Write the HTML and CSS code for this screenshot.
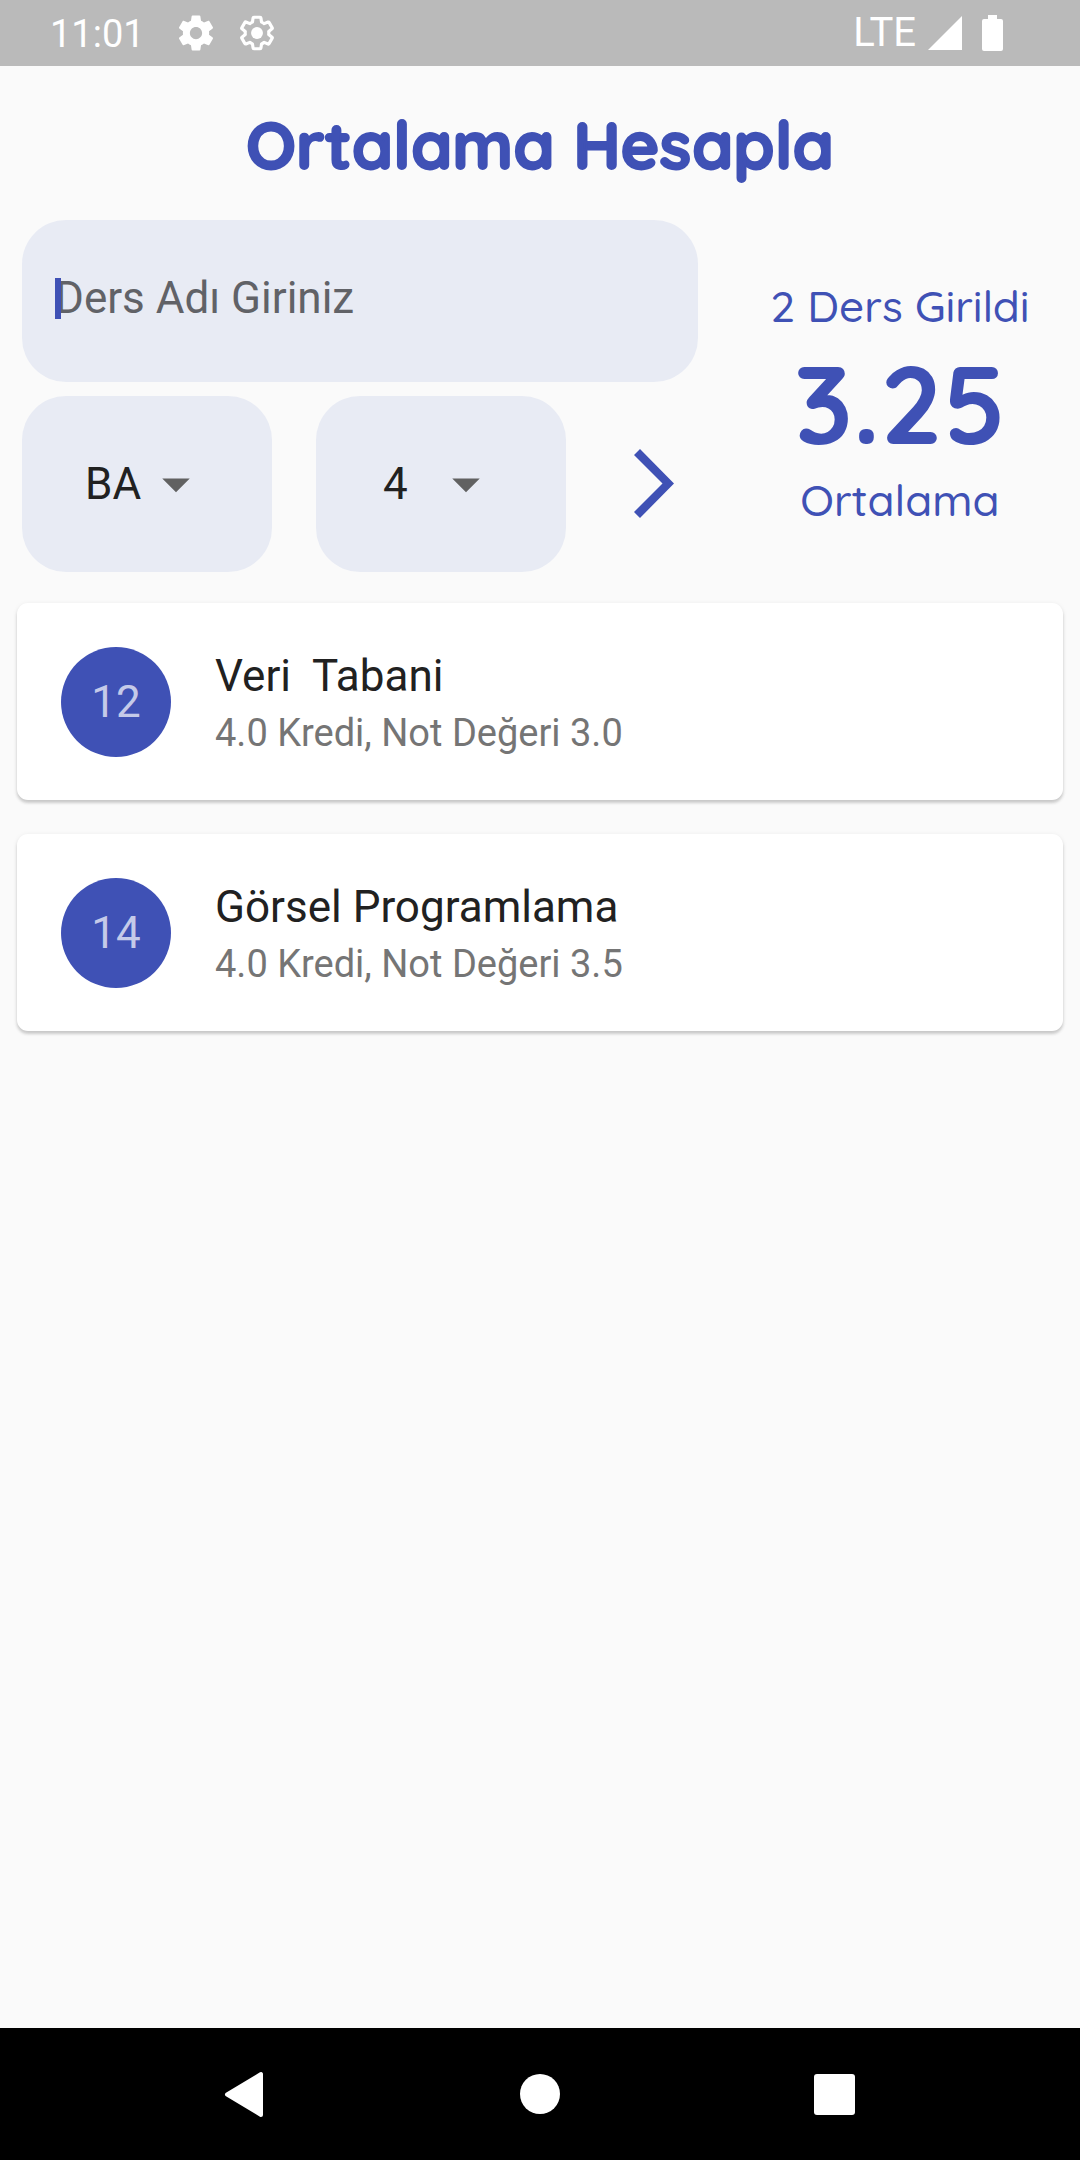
FILE: index.html
```
<!DOCTYPE html>
<html lang="tr">
<head>
<meta charset="utf-8">
<meta name="viewport" content="width=device-width, initial-scale=1">
<title>Ortalama Hesapla</title>
<link rel="stylesheet" href="styles.css">
</head>
<body>
<div class="status-bar">
  <span class="clock">11:01</span>
  <svg class="status-gear" viewBox="0 0 24 24" aria-hidden="true"><path fill="currentColor" d="M19.43 12.98c.04-.32.07-.64.07-.98s-.03-.66-.07-.98l2.11-1.65c.19-.15.24-.42.12-.64l-2-3.46c-.12-.22-.39-.3-.61-.22l-2.49 1c-.52-.4-1.08-.73-1.69-.98l-.38-2.65C14.46 2.18 14.25 2 14 2h-4c-.25 0-.46.18-.49.42l-.38 2.65c-.61.25-1.17.59-1.69.98l-2.49-1c-.23-.09-.49 0-.61.22l-2 3.46c-.13.22-.07.49.12.64l2.11 1.65c-.04.32-.07.65-.07.98s.03.66.07.98l-2.11 1.65c-.19.15-.24.42-.12.64l2 3.46c.12.22.39.3.61.22l2.49-1c.52.4 1.08.73 1.69.98l.38 2.65c.03.24.24.42.49.42h4c.25 0 .46-.18.49-.42l.38-2.65c.61-.25 1.17-.59 1.69-.98l2.49 1c.23.09.49 0 .61-.22l2-3.46c.12-.22.07-.49-.12-.64l-2.11-1.65zM12 15.5c-1.93 0-3.5-1.57-3.5-3.5s1.57-3.5 3.5-3.5 3.5 1.57 3.5 3.5-1.57 3.5-3.5 3.5z"/></svg>
  <svg class="status-gear" viewBox="0 0 24 24" aria-hidden="true"><path fill="none" stroke="currentColor" stroke-width="2" stroke-linejoin="round" transform="translate(1.2 1.2) scale(.9)" d="M19.43 12.98c.04-.32.07-.64.07-.98s-.03-.66-.07-.98l2.11-1.65c.19-.15.24-.42.12-.64l-2-3.46c-.12-.22-.39-.3-.61-.22l-2.49 1c-.52-.4-1.08-.73-1.69-.98l-.38-2.65C14.46 2.18 14.25 2 14 2h-4c-.25 0-.46.18-.49.42l-.38 2.65c-.61.25-1.17.59-1.69.98l-2.49-1c-.23-.09-.49 0-.61.22l-2 3.46c-.13.22-.07.49.12.64l2.11 1.65c-.04.32-.07.65-.07.98s.03.66.07.98l-2.11 1.65c-.19.15-.24.42-.12.64l2 3.46c.12.22.39.3.61.22l2.49-1c.52.4 1.08.73 1.69.98l.38 2.65c.03.24.24.42.49.42h4c.25 0 .46-.18.49-.42l.38-2.65c.61-.25 1.17-.59 1.69-.98l2.49 1c.23.09.49 0 .61-.22l2-3.46c.12-.22.07-.49-.12-.64l-2.11-1.65z"/><circle cx="12" cy="12" r="3.4" fill="currentColor"/></svg>
  <span class="network">LTE</span>
  <svg class="signal" viewBox="0 0 34 34" aria-hidden="true"><path fill="currentColor" d="M34 0v34H0z"/></svg>
  <svg class="battery" viewBox="0 0 21 36" aria-hidden="true"><path fill="currentColor" d="M6 0h9v4h4a2 2 0 0 1 2 2v28a2 2 0 0 1-2 2H2a2 2 0 0 1-2-2V6a2 2 0 0 1 2-2h4z"/></svg>
</div>

<main class="content">
  <h1 class="title">Ortalama Hesapla</h1>

  <div class="top">
    <form class="lesson-form">
      <div class="name-field">
        <input class="name-input" type="text" placeholder="Ders Adı Giriniz" aria-label="Ders Adı">
        <span class="cursor"></span>
      </div>
      <div class="form-row">
        <div class="picker">
          <select class="picker-select picker-grade" aria-label="Harf Notu">
            <option>AA</option>
            <option selected>BA</option>
            <option>BB</option>
          </select>
          <svg class="picker-arrow" viewBox="0 0 24 24" aria-hidden="true"><path fill="currentColor" d="M7 10l5 5 5-5z"/></svg>
        </div>
        <div class="picker">
          <select class="picker-select picker-credit" aria-label="Kredi">
            <option>3</option>
            <option selected>4</option>
            <option>5</option>
          </select>
          <svg class="picker-arrow" viewBox="0 0 24 24" aria-hidden="true"><path fill="currentColor" d="M7 10l5 5 5-5z"/></svg>
        </div>
        <button class="add" type="button" aria-label="Ders Ekle">
          <svg class="add-icon" viewBox="0 0 40 70" aria-hidden="true"><path fill="currentColor" d="M6 0l34 34.500L6 69l-6-6 28.500-28.500L0 6z"/></svg>
        </button>
      </div>
    </form>
    <section class="average">
      <p class="average-label">2 Ders Girildi</p>
      <p class="average-value">3.25</p>
      <p class="average-label">Ortalama</p>
    </section>
  </div>

  <ul class="lessons">
    <li class="lesson">
      <span class="avatar">12</span>
      <div class="lesson-text">
        <h2 class="lesson-name">Veri  Tabani</h2>
        <p class="lesson-info">4.0 Kredi, Not Değeri 3.0</p>
      </div>
    </li>
    <li class="lesson">
      <span class="avatar">14</span>
      <div class="lesson-text">
        <h2 class="lesson-name">Görsel Programlama</h2>
        <p class="lesson-info">4.0 Kredi, Not Değeri 3.5</p>
      </div>
    </li>
  </ul>
</main>

<nav class="nav-bar">
  <button class="nav-button" type="button" aria-label="Geri"><svg class="nav-icon" viewBox="0 0 48 48" aria-hidden="true"><path fill="currentColor" stroke="currentColor" stroke-width="4" stroke-linejoin="round" d="M39 4v41L5 24.500z"/></svg></button>
  <button class="nav-button" type="button" aria-label="Ana Ekran"><svg class="nav-icon" viewBox="0 0 48 48" aria-hidden="true"><circle fill="currentColor" cx="24" cy="24" r="20"/></svg></button>
  <button class="nav-button" type="button" aria-label="Son Uygulamalar"><svg class="nav-icon" viewBox="0 0 48 48" aria-hidden="true"><rect fill="currentColor" x="4" y="4" width="41" height="41" rx="3"/></svg></button>
</nav>
</body>
</html>
```
FILE: styles.css
```
:root {
  --indigo: #3f51b5;
  --field: #e8ebf4;
  --page: #fafafa;
}

* { box-sizing: border-box; }

body {
  margin: 0;
  min-height: 100vh;
  display: flex;
  flex-direction: column;
  background: var(--page);
  color: #212121;
  font-family: Roboto, "Liberation Sans", sans-serif;
  font-size: 44px;
  line-height: 52px;
}

h1, h2, p, ul { margin: 0; padding: 0; }

button, input, select {
  border: 0;
  padding: 0;
  background: none;
  color: inherit;
  font: inherit;
}

svg { display: block; flex: none; }

/* System status bar */
.status-bar {
  display: flex;
  align-items: center;
  height: 66px;
  padding: 0 77px 0 50px;
  background: #bababa;
  color: #fff;
}

.clock {
  margin-right: 30px;
  padding-top: 2px;
  font-size: 38px;
}

.status-gear {
  width: 42px;
  height: 42px;
  margin-right: 19px;
}

.network {
  margin-left: auto;
  font-size: 40px;
}

.signal {
  width: 34px;
  height: 34px;
  margin: 0 20px 0 12px;
}

.battery {
  width: 21px;
  height: 36px;
}

.content { flex: 1; }

.title {
  padding: 39px 0 35px;
  color: var(--indigo);
  font-family: Quicksand, Lato, sans-serif;
  font-size: 66px;
  font-weight: 900;
  line-height: 80px;
  text-align: center;
  -webkit-text-stroke: 2px var(--indigo);
}

/* Entry form and average */
.top {
  display: grid;
  grid-template-columns: 2fr 1fr;
}

.lesson-form {
  display: flex;
  flex-direction: column;
  gap: 14px;
  padding-left: 22px;
}

.name-field {
  position: relative;
  margin-right: 22px;
}

.name-input {
  width: 100%;
  height: 162px;
  padding: 0 33px 6px;
  border-radius: 44px;
  background: var(--field);
  outline: none;
}

.name-input::placeholder {
  color: #616267;
  opacity: 1;
}

.cursor {
  position: absolute;
  left: 33px;
  top: 58px;
  width: 6px;
  height: 41px;
  background: var(--indigo);
}

.form-row {
  display: flex;
  gap: 44px;
}

.picker {
  flex: 1;
  display: flex;
  align-items: center;
  justify-content: center;
  height: 176px;
  border-radius: 44px;
  background: var(--field);
}

.picker-select {
  appearance: none;
  outline: none;
}

.picker-grade { width: 124px; }
.picker-credit { width: 116px; }

.picker-arrow {
  width: 66px;
  height: 66px;
  margin-left: -66px;
  color: #616161;
  pointer-events: none;
}

.add {
  display: flex;
  align-items: center;
  justify-content: center;
  width: 132px;
  margin-left: -22px;
  color: var(--indigo);
}

.add-icon {
  width: 40px;
  height: 70px;
}

.average {
  display: flex;
  flex-direction: column;
  align-items: center;
  justify-content: center;
  padding-top: 14px;
  color: var(--indigo);
  font-family: Quicksand, Lato, sans-serif;
  text-align: center;
}

.average-label {
  font-weight: 500;
  line-height: 56px;
}

.average-value {
  font-size: 110px;
  font-weight: 700;
  line-height: 138px;
}

/* Lesson cards */
.lessons {
  display: grid;
  gap: 34px;
  padding: 31px 17px;
  list-style: none;
}

.lesson {
  display: flex;
  align-items: center;
  gap: 44px;
  height: 197px;
  padding: 0 44px;
  border-radius: 11px;
  background: #fff;
  box-shadow: 0 3px 3px rgba(0, 0, 0, .16), 0 1px 5px rgba(0, 0, 0, .08);
}

.avatar {
  display: grid;
  place-items: center;
  flex: none;
  width: 110px;
  height: 110px;
  border-radius: 50%;
  background: var(--indigo);
  color: #c5cae9;
}

.lesson-name {
  font-size: 44px;
  font-weight: 400;
  line-height: 62px;
  white-space: pre;
}

.lesson-info {
  color: #757575;
  font-size: 38px;
  line-height: 52px;
}

/* System navigation */
.nav-bar {
  display: flex;
  align-items: center;
  justify-content: center;
  gap: 246px;
  height: 132px;
  background: #000;
  color: #fff;
}

.nav-icon {
  width: 48px;
  height: 48px;
}
```
